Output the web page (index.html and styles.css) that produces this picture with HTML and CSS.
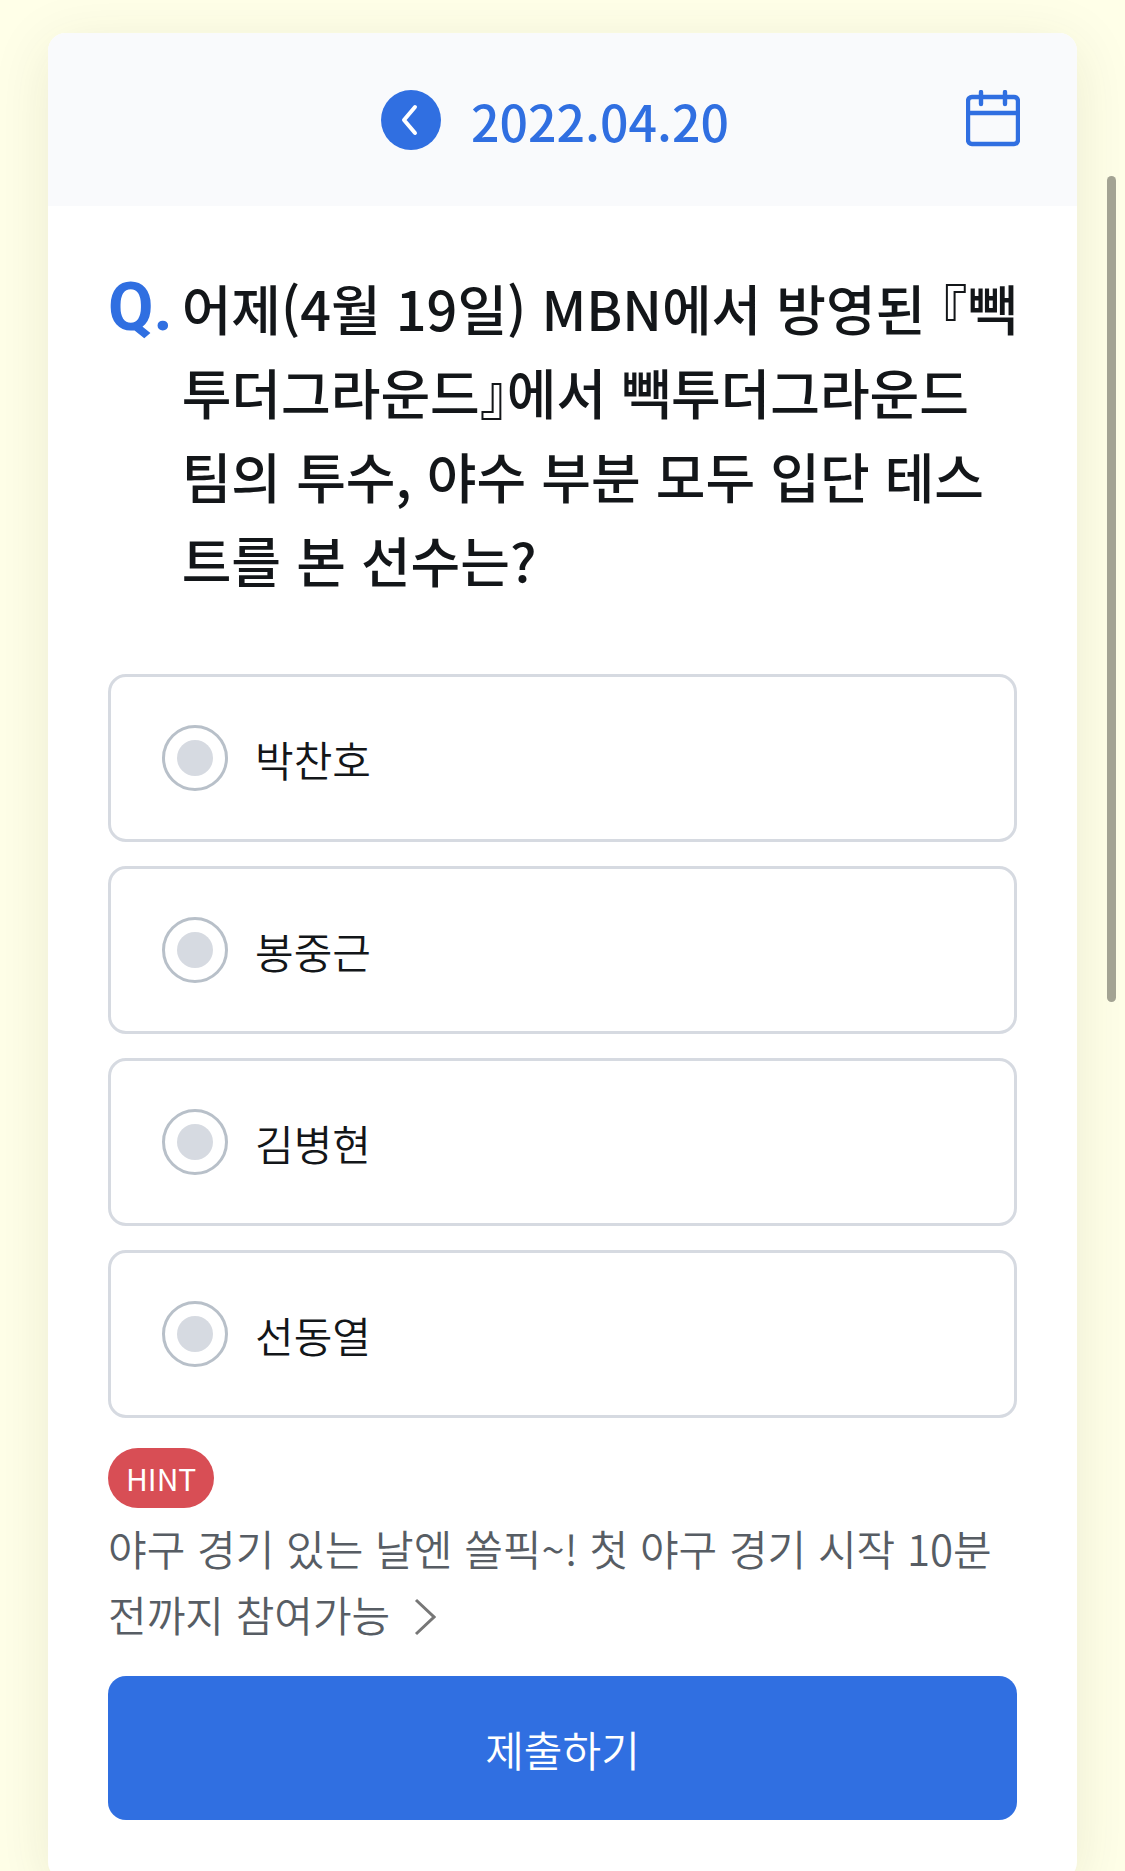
FILE: index.html
```html
<!DOCTYPE html>
<html lang="ko">
<head>
    <meta charset="UTF-8">
    <meta name="viewport" content="width=device-width, initial-scale=1.0">
    <title>쏠야구 퀴즈</title>
    <link rel="stylesheet" href="styles.css">
</head>
<body>

<main class="quiz-card">
    <header class="quiz-header">
        <div class="date-nav">
            <button type="button" class="prev-btn" aria-label="이전 날짜">
                <svg viewBox="0 0 60 60" aria-hidden="true">
                    <path d="M34 17 L23 30 L34 43" />
                </svg>
            </button>
            <span class="date">2022.04.20</span>
        </div>
        <button type="button" class="calendar-btn" aria-label="달력">
            <svg viewBox="0 0 54 60" aria-hidden="true">
                <rect x="2" y="7" width="50" height="47" rx="4" />
                <path d="M2 23 H52" />
                <path class="ring" d="M15 2 V14 M39 2 V14" />
            </svg>
        </button>
    </header>

    <form class="quiz-body">
        <div class="question">
            <span class="q-mark">Q.</span>
            <h1 class="q-text">
                어제(4월 19일) MBN에서 방영된 『빽<br>
                투더그라운드』에서 빽투더그라운드<br>
                팀의 투수, 야수 부분 모두 입단 테스<br>
                트를 본 선수는?
            </h1>
        </div>

        <div class="answers">
            <label class="answer"><input type="radio" name="answer" value="1">박찬호</label>
            <label class="answer"><input type="radio" name="answer" value="2">봉중근</label>
            <label class="answer"><input type="radio" name="answer" value="3">김병현</label>
            <label class="answer"><input type="radio" name="answer" value="4">선동열</label>
        </div>

        <div class="hint">
            <span class="hint-badge">HINT</span>
            <a href="#" class="hint-link">
                야구 경기 있는 날엔 쏠픽~! 첫 야구 경기 시작 10분<br>
                전까지 참여가능
                <svg class="hint-arrow" viewBox="0 0 22 38" aria-hidden="true">
                    <path d="M2 2 L20 19 L2 36" />
                </svg>
            </a>
        </div>

        <button type="submit" class="submit-btn">제출하기</button>
    </form>
</main>

<!-- 스크롤 표시 -->
<div class="scroll-thumb"></div>

</body>
</html>
```
FILE: styles.css
```css
* {
    box-sizing: border-box;
}

body {
    margin: 0;
    height: 100vh;
    overflow: hidden;
    background-color: #ffffe8;
    font-family: "Noto Sans CJK KR", sans-serif;
    color: #131619;
}

button {
    border: 0;
    padding: 0;
    background: none;
    font-family: inherit;
    cursor: pointer;
}

svg {
    display: block;
    fill: none;
}

.quiz-card {
    margin: 33px 48px;
    border-radius: 18px;
    background-color: #fff;
    box-shadow: 0 12px 60px rgba(60, 60, 0, 0.1);
}

/* 날짜 영역 */
.quiz-header {
    display: grid;
    grid-template-columns: 1fr auto 1fr;
    align-items: center;
    height: 173px;
    padding: 0 57px;
    border-radius: 18px 18px 0 0;
    background-color: #f9fafc;
}

.date-nav {
    grid-column: 2;
    display: flex;
    align-items: center;
    gap: 30px;
    padding-right: 15px;
}

.prev-btn {
    width: 60px;
    height: 60px;
    border-radius: 50%;
    background-color: #306fe1;
}

.prev-btn svg {
    stroke: #fff;
    stroke-width: 4;
    stroke-linecap: round;
    stroke-linejoin: round;
}

.date {
    font-size: 50px;
    line-height: 60px;
    font-weight: 500;
    color: #306fe1;
}

.calendar-btn {
    justify-self: end;
    width: 54px;
}

.calendar-btn svg {
    stroke: #306fe1;
    stroke-width: 4.4;
}

.calendar-btn .ring {
    stroke-linecap: round;
}

/* 문제 */
.quiz-body {
    padding: 60px;
}

.question {
    display: flex;
    gap: 9px;
    margin-bottom: 72px;
    line-height: 84px;
}

.q-mark {
    font-family: Roboto, sans-serif;
    font-size: 66px;
    font-weight: 700;
    color: #306fe1;
}

.q-text {
    margin: 0;
    font-size: 54px;
    font-weight: 500;
    font-feature-settings: "halt";
    white-space: nowrap;
}

/* 보기 */
.answers {
    display: flex;
    flex-direction: column;
    gap: 24px;
}

.answer {
    display: flex;
    align-items: center;
    gap: 27px;
    height: 168px;
    padding: 0 51px;
    border: 3px solid #d6dae1;
    border-radius: 18px;
    font-size: 42px;
    font-weight: 350;
    cursor: pointer;
}

.answer input {
    appearance: none;
    width: 66px;
    height: 66px;
    margin: 0;
    padding: 12px;
    border: 3px solid #b8c0c9;
    border-radius: 50%;
    background: #d6dae1 content-box;
}

.answer input:checked {
    border-color: #306fe1;
    background-color: #306fe1;
}

/* 힌트 */
.hint {
    margin: 30px 0 29px;
}

.hint-badge {
    display: block;
    width: fit-content;
    margin-bottom: 7px;
    padding: 0 18px;
    border-radius: 30px;
    background-color: #d84e55;
    font-size: 30px;
    line-height: 60px;
    color: #fff;
}

.hint-link {
    display: block;
    font-size: 42px;
    line-height: 66px;
    font-weight: 350;
    color: #575d64;
    text-decoration: none;
    white-space: nowrap;
}

.hint-arrow {
    display: inline-block;
    width: 22px;
    height: 38px;
    margin-left: 12px;
    vertical-align: -4px;
    stroke: #777;
    stroke-width: 3;
}

.submit-btn {
    display: block;
    width: 100%;
    height: 144px;
    border-radius: 18px;
    background-color: #306fe1;
    font-size: 42px;
    font-weight: 350;
    color: #fff;
}

.scroll-thumb {
    position: fixed;
    top: 176px;
    right: 9px;
    width: 9px;
    height: 826px;
    border-radius: 5px;
    background-color: #a3a393;
}
```
